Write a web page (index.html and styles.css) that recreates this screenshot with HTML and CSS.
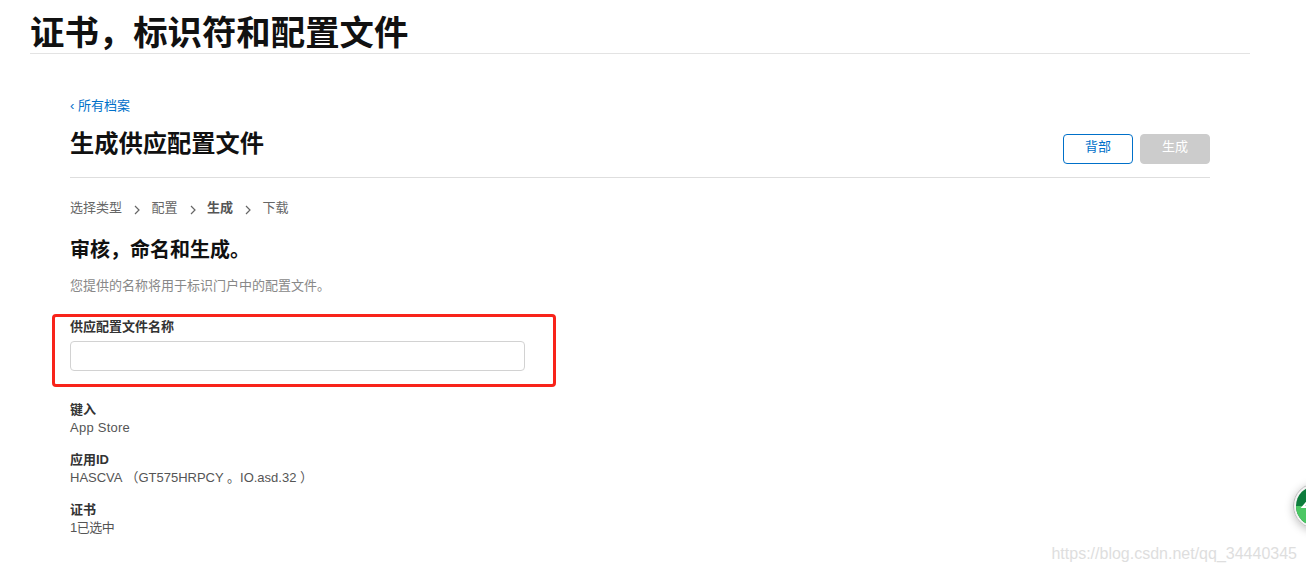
FILE: index.html
```html
<!DOCTYPE html>
<html lang="zh">
<head>
<meta charset="utf-8">
<title>证书，标识符和配置文件</title>
<link rel="stylesheet" href="styles.css">
</head>
<body>
<div class="page">
  <h1 class="page-title">证书，标识符和配置文件</h1>
  <main class="content">
    <a class="back" href="#"><span class="back-arrow">‹</span> 所有档案</a>
    <div class="head">
      <h2 class="head-title">生成供应配置文件</h2>
      <div class="actions">
        <button class="btn btn-back">背部</button>
        <button class="btn btn-gen">生成</button>
      </div>
    </div>
    <nav class="steps">
      <span>选择类型</span>
      <svg class="chev" viewBox="0 0 6 10"><path d="M1 1l4 4-4 4" fill="none" stroke="#666" stroke-width="1.2"/></svg>
      <span>配置</span>
      <svg class="chev" viewBox="0 0 6 10"><path d="M1 1l4 4-4 4" fill="none" stroke="#666" stroke-width="1.2"/></svg>
      <span class="current">生成</span>
      <svg class="chev" viewBox="0 0 6 10"><path d="M1 1l4 4-4 4" fill="none" stroke="#666" stroke-width="1.2"/></svg>
      <span>下载</span>
    </nav>
    <h3 class="section-title">审核，命名和生成。</h3>
    <p class="desc">您提供的名称将用于标识门户中的配置文件。</p>
    <div class="field">
      <label class="field-label" for="name">供应配置文件名称</label>
      <input class="field-input" id="name" type="text">
      <div class="highlight"></div>
    </div>
    <dl class="info">
      <dt>键入</dt>
      <dd class="latin">App Store</dd>
      <dt>应用ID</dt>
      <dd>HASCVA （GT575HRPCY 。IO.asd.32 ）</dd>
      <dt>证书</dt>
      <dd class="tight">1已选中</dd>
    </dl>
  </main>
</div>
<div class="float-badge">
  <svg viewBox="0 0 46 46" width="46" height="46">
    <circle cx="23" cy="23" r="22.5" fill="#f4f4f4" stroke="#bbb" stroke-width="1"/>
    <circle cx="23" cy="23" r="20" fill="#0e7c3c"/>
    <path d="M3 23h40a20 20 0 0 1-40 0z" fill="#4cc764"/>
    <path d="M10 24l6-7 6 7z" fill="none" stroke="#fff" stroke-width="2.2"/>
  </svg>
</div>
<div class="watermark">https://blog.csdn.net/qq_34440345</div>
</body>
</html>
```

FILE: styles.css
```css
* { box-sizing: border-box; }
html, body { margin: 0; height: 572px; overflow: hidden; background: #fff; }
body {
  position: relative;
  font-family: "Liberation Sans", "Noto Sans CJK SC", sans-serif;
  color: #333;
}
.page { width: 1250px; padding-left: 30px; }
.page-title {
  margin: 0;
  height: 54px;
  padding-top: 12px;
  font-size: 34.4px;
  line-height: 42px;
  font-weight: 700;
  color: #111;
  border-bottom: 1px solid #e3e3e3;
}
.content { padding: 43px 40px 0; }
.back {
  display: block;
  font-size: 13px;
  line-height: 17px;
  color: #0070c9;
  text-decoration: none;
}
.back-arrow { font-size: 13px; }
.head {
  display: flex;
  justify-content: space-between;
  height: 61px;
  margin-top: 3px;
  padding-top: 12px;
  border-bottom: 1px solid #dedede;
}
.head-title {
  margin: 0;
  font-size: 24.25px;
  line-height: 30px;
  font-weight: 700;
  color: #111;
}
.actions { display: flex; gap: 7px; padding-top: 5px; height: 35px; }
.btn {
  width: 70px;
  height: 30px;
  padding: 0 0 6px;
  border-radius: 4px;
  font: 13px/1 "Liberation Sans", "Noto Sans CJK SC", sans-serif;
}
.btn-back { background: #fff; border: 1px solid #0070c9; color: #0070c9; }
.btn-gen { background: #ccc; border: 1px solid #ccc; color: #fff; }
.steps {
  display: flex;
  align-items: center;
  margin-top: 21px;
  height: 17px;
  font-size: 13px;
  line-height: 17px;
  color: #666;
}
.steps .current { font-weight: 700; color: #555; }
.chev { width: 6px; height: 10px; margin: 4px 11.5px 0 12px; }
.section-title {
  margin: 21px 0 0;
  font-size: 20px;
  line-height: 26px;
  font-weight: 700;
  color: #111;
}
.desc {
  margin: 14px 0 0;
  font-size: 13px;
  line-height: 17px;
  color: #888;
}
.field { position: relative; margin-top: 24px; }
.field-label {
  display: block;
  font-size: 13px;
  line-height: 17px;
  font-weight: 700;
  color: #333;
}
.field-input {
  display: block;
  width: 455px;
  height: 30px;
  margin-top: 6px;
  border: 1px solid #d2d2d2;
  border-radius: 4px;
  background: #fff;
}
.highlight {
  position: absolute;
  left: -18px;
  top: -4px;
  width: 504px;
  height: 73px;
  border: 3px solid #f8231a;
  border-radius: 4px;
  pointer-events: none;
}
.info { margin: 30px 0 0; }
.info dt {
  font-size: 13px;
  line-height: 18px;
  font-weight: 700;
  color: #333;
}
.info dd {
  margin: 0 0 15px;
  font-size: 13px;
  line-height: 17px;
  color: #555;
}
.info .latin { letter-spacing: .25px; }
.info .tight { letter-spacing: -.5px; }
.float-badge {
  position: absolute;
  left: 1293px;
  top: 483px;
  width: 46px;
  height: 46px;
  border-radius: 50%;
  box-shadow: 0 2px 8px rgba(0,0,0,.25);
}
.watermark {
  position: absolute;
  right: 9px;
  top: 544px;
  font-size: 16px;
  line-height: 20px;
  color: #dedede;
  white-space: nowrap;
}
```
